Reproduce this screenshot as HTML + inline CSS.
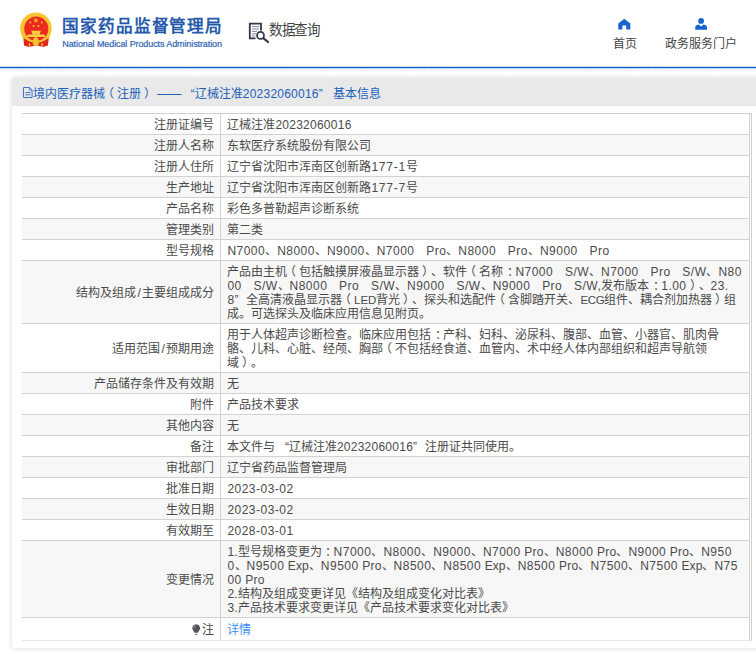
<!DOCTYPE html>
<html lang="zh-CN">
<head>
<meta charset="utf-8">
<title>国家药品监督管理局 数据查询</title>
<style>
*{box-sizing:border-box;margin:0;padding:0}
html,body{width:756px;height:654px;overflow:hidden;background:#fff}
body{text-spacing-trim:space-all;font-family:"Liberation Sans",sans-serif;font-size:12px;color:#444;position:relative}
.abs{position:absolute;white-space:nowrap}
#hdr{position:absolute;left:0;top:0;width:756px;height:66px;background:#fff}
#blueline{position:absolute;left:0;top:66px;width:756px;height:3px;background:linear-gradient(#c9dbf2 0,#c9dbf2 1px,#1163c3 1px,#1163c3 2px,#bcd3ef 2px,#bcd3ef 3px)}
#hatch{left:0;top:69px}
#title{left:62.4px;top:14.2px;font-size:16.6px;font-weight:bold;color:#2659ab;line-height:26px;letter-spacing:.85px}
#sub{left:62.3px;top:37.6px;font-size:9px;letter-spacing:-.1px;color:#2e62b3;line-height:12px;-webkit-text-stroke:.2px #2e62b3}
#q{left:269px;top:20.3px;font-size:13.5px;letter-spacing:-.3px;color:#444;line-height:22px;transform:scaleY(1.09);transform-origin:50% 50%}
.nav{font-size:12px;color:#444;line-height:14px}
#card{position:absolute;left:12px;top:78px;width:760px;height:570px;background:#fff;
 box-shadow:0 0 5px rgba(0,0,0,.16)}
#cardh{position:absolute;left:0;top:0;width:100%;height:28px;background:#e9e9e9;color:#2060b8;
 font-size:12px;line-height:32px;padding-left:21.3px;white-space:nowrap}
table{position:absolute;left:10px;top:35px;width:730px;padding-right:1px;border-collapse:separate;border-spacing:0;
 border-top:1px solid #cfcfcf;border-right:1px solid #cfcfcf;table-layout:fixed}
td{border-bottom:1px solid #d2d2d2;padding:4px 7px 2px 6.4px;line-height:14px;font-size:12px;
 vertical-align:middle;white-space:nowrap;overflow:hidden;color:#4a4a4a}
td.l{width:199px;text-align:right;padding-right:5.6px;border-right:1px solid #d2d2d2}
td:last-child{border-right:1px solid #d0d0d0}
tr.g td{background:#f7f7f7}
tr:last-child td{border-bottom:1px solid #e4e6f0;height:23px}
i{font-style:normal;letter-spacing:.48px;word-spacing:.1px;white-space:pre}
u{text-decoration:none;display:inline-block;width:11.5px;text-align:left}
s{text-decoration:none;display:inline-block;width:13.5px;text-align:right}
b{font-weight:normal;padding:0 1.6px}
i.w{letter-spacing:.75px}
i.z{letter-spacing:.1px}
i.d{letter-spacing:.25px}
i.p{letter-spacing:.22px}
em{font-style:normal;position:relative;left:-3px}
em.r{left:3px}
em.c{left:3.5px}
a{color:#3a8ef6;font-size:12px}
.bulb{vertical-align:-1px;margin-right:1.6px}
svg{position:absolute;overflow:visible}
td svg{position:static}
</style>
</head>
<body>
<div id="hdr">
<svg style="left:20px;top:12px" width="32" height="36" viewBox="20 12 32 36">
<circle cx="35.9" cy="28.3" r="15.8" fill="#f7c530"/>
<circle cx="36.3" cy="28.7" r="12.1" fill="#ee2a20"/>
<path d="M23.3 37.4 L24.1 45.6 L28.8 46.9 L36 45.3 L43.2 46.9 L47.9 45.6 L48.9 37.4 Q36 48 23.3 37.4 Z" fill="#e32519"/>
<path d="M24.2 37 Q36 46.6 48.4 37" fill="none" stroke="#f7c530" stroke-width="1.2"/>
<path d="M22.2 36 L24.4 38.6 M49.8 36 L47.9 38.6" stroke="#f7c530" stroke-width="1.6"/>
<path d="M31.3 30.8 H40.9 L40.1 33.1 H32.1 Z" fill="#f9cf36"/>
<rect x="32.3" y="33.1" width="7.6" height="1.6" fill="#fbdc62"/>
<path d="M27.6 34.6 H44.6 L45.1 37 H27 Z" fill="#f9d23a"/>
<circle cx="35.8" cy="39.7" r="2.5" fill="#f7c832"/>
<path d="M32.6 43 L35.8 42 L39 43 L38.2 44.9 L35.8 45.4 L33.4 44.9 Z" fill="#f7c832"/>
<path d="M28.6 43.2 L30.2 43.6 L30.1 46.6 L29 46.4 Z M41.4 43.6 L43 43.2 L42.6 46.4 L41.5 46.6 Z" fill="#f5d04a"/>
<polygon points="35.9,17.5 36.6,19.5 38.7,19.5 37,20.8 37.7,22.8 35.9,21.6 34.1,22.8 34.8,20.8 33.1,19.5 35.2,19.5" fill="#f7c530"/>
<circle cx="30.3" cy="22.6" r="1" fill="#f7c530"/><circle cx="41.8" cy="22.6" r="1" fill="#f7c530"/>
<circle cx="33.6" cy="26.1" r="1" fill="#f7c530"/><circle cx="38.5" cy="26.1" r="1" fill="#f7c530"/>
</svg>
<svg style="left:248px;top:22px" width="22" height="21" viewBox="248 22 22 21" fill="none" stroke="#34344a">
<path d="M261 30.5 V23.7 H249.8 V38.3 H255.5" stroke-width="1.8"/>
<path d="M252 26.6 H259 M252 29 H259 M252 31.4 H257 M252 33.8 H255.8 M252 36 H255.2" stroke-width="1" stroke="#85858f"/>
<circle cx="260.5" cy="35.4" r="3.5" stroke-width="1.7" fill="#fff"/>
<path d="M263.3 38.2 L268 42" stroke-width="2.2" stroke-linecap="round"/>
</svg>
<svg style="left:618px;top:18px" width="13" height="12" viewBox="618 18 13 12">
<path d="M624.3 18.8 L630.3 23.6 V29.4 H626.2 V25.6 H622.4 V29.4 H618.3 V23.6 Z" fill="#1763d0"/></svg>
<svg style="left:695px;top:17px" width="13" height="13" viewBox="695 17 13 13">
<circle cx="701.1" cy="20.9" r="2.9" fill="#1763d0"/>
<path d="M695.2 29.8 V27.6 Q695.2 25.2 698.6 24.6 L701.1 26.6 L703.6 24.6 Q707 25.2 707 27.6 V29.8 Z" fill="#1763d0"/></svg>
<div id="title" class="abs">国家药品监督管理局</div>
<div id="sub" class="abs">National Medical Products Administration</div>
<div id="q" class="abs">数据查询</div>
<div class="abs nav" style="left:612.5px;top:37px">首页</div>
<div class="abs nav" style="left:664.5px;top:37px">政务服务门户</div>
</div>
<div id="blueline"></div>
<svg id="hatch" width="756" height="3" viewBox="0 0 756 3"><path d="M0.4 2.3l1.8-1.8M3.47 2.3l1.8-1.8M6.54 2.3l1.8-1.8M9.61 2.3l1.8-1.8M12.68 2.3l1.8-1.8M15.75 2.3l1.8-1.8M18.82 2.3l1.8-1.8M21.89 2.3l1.8-1.8M24.96 2.3l1.8-1.8M28.03 2.3l1.8-1.8M31.1 2.3l1.8-1.8M34.17 2.3l1.8-1.8M37.24 2.3l1.8-1.8M40.31 2.3l1.8-1.8M43.38 2.3l1.8-1.8M46.45 2.3l1.8-1.8M49.52 2.3l1.8-1.8M52.59 2.3l1.8-1.8M55.66 2.3l1.8-1.8M58.73 2.3l1.8-1.8M61.8 2.3l1.8-1.8M64.87 2.3l1.8-1.8M67.94 2.3l1.8-1.8M71.01 2.3l1.8-1.8M74.08 2.3l1.8-1.8M77.15 2.3l1.8-1.8M80.22 2.3l1.8-1.8M83.29 2.3l1.8-1.8M86.36 2.3l1.8-1.8M89.43 2.3l1.8-1.8M92.5 2.3l1.8-1.8M95.57 2.3l1.8-1.8M98.64 2.3l1.8-1.8M101.71 2.3l1.8-1.8M104.78 2.3l1.8-1.8M107.85 2.3l1.8-1.8M110.92 2.3l1.8-1.8M113.99 2.3l1.8-1.8M117.06 2.3l1.8-1.8M120.13 2.3l1.8-1.8M123.2 2.3l1.8-1.8M126.27 2.3l1.8-1.8M129.34 2.3l1.8-1.8M132.41 2.3l1.8-1.8M135.48 2.3l1.8-1.8M138.55 2.3l1.8-1.8M141.62 2.3l1.8-1.8M144.69 2.3l1.8-1.8M147.76 2.3l1.8-1.8M150.83 2.3l1.8-1.8M153.9 2.3l1.8-1.8M156.97 2.3l1.8-1.8M160.04 2.3l1.8-1.8M163.11 2.3l1.8-1.8M166.18 2.3l1.8-1.8M169.25 2.3l1.8-1.8M172.32 2.3l1.8-1.8M175.39 2.3l1.8-1.8M178.46 2.3l1.8-1.8M181.53 2.3l1.8-1.8M184.6 2.3l1.8-1.8M187.67 2.3l1.8-1.8M190.74 2.3l1.8-1.8M193.81 2.3l1.8-1.8M196.88 2.3l1.8-1.8M199.95 2.3l1.8-1.8M203.02 2.3l1.8-1.8M206.09 2.3l1.8-1.8M209.16 2.3l1.8-1.8M212.23 2.3l1.8-1.8M215.3 2.3l1.8-1.8M218.37 2.3l1.8-1.8M221.44 2.3l1.8-1.8M224.51 2.3l1.8-1.8M227.58 2.3l1.8-1.8M230.65 2.3l1.8-1.8M233.72 2.3l1.8-1.8M236.79 2.3l1.8-1.8M239.86 2.3l1.8-1.8M242.93 2.3l1.8-1.8M246.0 2.3l1.8-1.8M249.07 2.3l1.8-1.8M252.14 2.3l1.8-1.8M255.21 2.3l1.8-1.8M258.28 2.3l1.8-1.8M261.35 2.3l1.8-1.8M264.42 2.3l1.8-1.8M267.49 2.3l1.8-1.8M270.56 2.3l1.8-1.8M273.63 2.3l1.8-1.8M276.7 2.3l1.8-1.8M279.77 2.3l1.8-1.8M282.84 2.3l1.8-1.8M285.91 2.3l1.8-1.8M288.98 2.3l1.8-1.8M292.05 2.3l1.8-1.8M295.12 2.3l1.8-1.8M298.19 2.3l1.8-1.8M301.26 2.3l1.8-1.8M304.33 2.3l1.8-1.8M307.4 2.3l1.8-1.8M310.47 2.3l1.8-1.8M313.54 2.3l1.8-1.8M316.61 2.3l1.8-1.8M319.68 2.3l1.8-1.8M322.75 2.3l1.8-1.8M325.82 2.3l1.8-1.8M328.89 2.3l1.8-1.8M331.96 2.3l1.8-1.8M335.03 2.3l1.8-1.8M338.1 2.3l1.8-1.8M341.17 2.3l1.8-1.8M344.24 2.3l1.8-1.8M347.31 2.3l1.8-1.8M350.38 2.3l1.8-1.8M353.45 2.3l1.8-1.8M356.52 2.3l1.8-1.8M359.59 2.3l1.8-1.8M362.66 2.3l1.8-1.8M365.73 2.3l1.8-1.8M368.8 2.3l1.8-1.8M371.87 2.3l1.8-1.8M374.94 2.3l1.8-1.8M378.01 2.3l1.8-1.8M381.08 2.3l1.8-1.8M384.15 2.3l1.8-1.8M387.22 2.3l1.8-1.8M390.29 2.3l1.8-1.8M393.36 2.3l1.8-1.8M396.43 2.3l1.8-1.8M399.5 2.3l1.8-1.8M402.57 2.3l1.8-1.8M405.64 2.3l1.8-1.8M408.71 2.3l1.8-1.8M411.78 2.3l1.8-1.8M414.85 2.3l1.8-1.8M417.92 2.3l1.8-1.8M420.99 2.3l1.8-1.8M424.06 2.3l1.8-1.8M427.13 2.3l1.8-1.8M430.2 2.3l1.8-1.8M433.27 2.3l1.8-1.8M436.34 2.3l1.8-1.8M439.41 2.3l1.8-1.8M442.48 2.3l1.8-1.8M445.55 2.3l1.8-1.8M448.62 2.3l1.8-1.8M451.69 2.3l1.8-1.8M454.76 2.3l1.8-1.8M457.83 2.3l1.8-1.8M460.9 2.3l1.8-1.8M463.97 2.3l1.8-1.8M467.04 2.3l1.8-1.8M470.11 2.3l1.8-1.8M473.18 2.3l1.8-1.8M476.25 2.3l1.8-1.8M479.32 2.3l1.8-1.8M482.39 2.3l1.8-1.8M485.46 2.3l1.8-1.8M488.53 2.3l1.8-1.8M491.6 2.3l1.8-1.8M494.67 2.3l1.8-1.8M497.74 2.3l1.8-1.8M500.81 2.3l1.8-1.8M503.88 2.3l1.8-1.8M506.95 2.3l1.8-1.8M510.02 2.3l1.8-1.8M513.09 2.3l1.8-1.8M516.16 2.3l1.8-1.8M519.23 2.3l1.8-1.8M522.3 2.3l1.8-1.8M525.37 2.3l1.8-1.8M528.44 2.3l1.8-1.8M531.51 2.3l1.8-1.8M534.58 2.3l1.8-1.8M537.65 2.3l1.8-1.8M540.72 2.3l1.8-1.8M543.79 2.3l1.8-1.8M546.86 2.3l1.8-1.8M549.93 2.3l1.8-1.8M553.0 2.3l1.8-1.8M556.07 2.3l1.8-1.8M559.14 2.3l1.8-1.8M562.21 2.3l1.8-1.8M565.28 2.3l1.8-1.8M568.35 2.3l1.8-1.8M571.42 2.3l1.8-1.8M574.49 2.3l1.8-1.8M577.56 2.3l1.8-1.8M580.63 2.3l1.8-1.8M583.7 2.3l1.8-1.8M586.77 2.3l1.8-1.8M589.84 2.3l1.8-1.8M592.91 2.3l1.8-1.8M595.98 2.3l1.8-1.8M599.05 2.3l1.8-1.8M602.12 2.3l1.8-1.8M605.19 2.3l1.8-1.8M608.26 2.3l1.8-1.8M611.33 2.3l1.8-1.8M614.4 2.3l1.8-1.8M617.47 2.3l1.8-1.8M620.54 2.3l1.8-1.8M623.61 2.3l1.8-1.8M626.68 2.3l1.8-1.8M629.75 2.3l1.8-1.8M632.82 2.3l1.8-1.8M635.89 2.3l1.8-1.8M638.96 2.3l1.8-1.8M642.03 2.3l1.8-1.8M645.1 2.3l1.8-1.8M648.17 2.3l1.8-1.8M651.24 2.3l1.8-1.8M654.31 2.3l1.8-1.8M657.38 2.3l1.8-1.8M660.45 2.3l1.8-1.8M663.52 2.3l1.8-1.8M666.59 2.3l1.8-1.8M669.66 2.3l1.8-1.8M672.73 2.3l1.8-1.8M675.8 2.3l1.8-1.8M678.87 2.3l1.8-1.8M681.94 2.3l1.8-1.8M685.01 2.3l1.8-1.8M688.08 2.3l1.8-1.8M691.15 2.3l1.8-1.8M694.22 2.3l1.8-1.8M697.29 2.3l1.8-1.8M700.36 2.3l1.8-1.8M703.43 2.3l1.8-1.8M706.5 2.3l1.8-1.8M709.57 2.3l1.8-1.8M712.64 2.3l1.8-1.8M715.71 2.3l1.8-1.8M718.78 2.3l1.8-1.8M721.85 2.3l1.8-1.8M724.92 2.3l1.8-1.8M727.99 2.3l1.8-1.8M731.06 2.3l1.8-1.8M734.13 2.3l1.8-1.8M737.2 2.3l1.8-1.8M740.27 2.3l1.8-1.8M743.34 2.3l1.8-1.8M746.41 2.3l1.8-1.8M749.48 2.3l1.8-1.8M752.55 2.3l1.8-1.8M755.62 2.3l1.8-1.8" stroke="#d4d4d4" stroke-width=".8" fill="none"/></svg>
<div id="card">
<div id="cardh"><svg style="left:10.8px;top:9.2px" width="10" height="11" viewBox="0 0 10 11" fill="none" stroke="#2c66c4" stroke-width=".9"><path d="M.5 .5 H6.6 L9.1 3 V10.5 H.5 Z"/><path d="M6.4 .8 V3.2 H8.8" stroke-width=".7"/><path d="M2.3 5.5 H7.5 M2.3 7.8 H7.5" stroke-width=".9"/></svg>境内医疗器械<em>（</em>注册<em class="r">）</em><span style="display:inline-block;width:4px"></span>——<s>“</s>辽械注准<i style="letter-spacing:.23px">20232060016</i><u style="width:14px">”</u>基本信息</div>
<table>
<tr><td class="l">注册证编号</td><td>辽械注准<i class="d">20232060016</i></td></tr>
<tr class="g"><td class="l">注册人名称</td><td>东软医疗系统股份有限公司</td></tr>
<tr><td class="l">注册人住所</td><td>辽宁省沈阳市浑南区创新路<i class="w">177-1</i>号</td></tr>
<tr class="g"><td class="l">生产地址</td><td>辽宁省沈阳市浑南区创新路<i class="w">177-7</i>号</td></tr>
<tr><td class="l">产品名称</td><td>彩色多普勒超声诊断系统</td></tr>
<tr class="g"><td class="l">管理类别</td><td>第二类</td></tr>
<tr><td class="l">型号规格</td><td><i>N7000</i>、<i>N8000</i>、<i>N9000</i>、<i>N7000   Pro</i>、<i>N8000   Pro</i>、<i>N9000   Pro</i></td></tr>
<tr class="g"><td class="l">结构及组成<b>/</b>主要组成成分</td><td>产品由主机<em>（</em>包括触摸屏液晶显示器<em class="r">）</em>、软件<em>（</em>名称<em class="c">：</em><i>N7000   S/W</i>、<i>N7000   Pro   S/W</i>、<i>N80</i><br><i>00   S/W</i>、<i>N8000   Pro   S/W</i>、<i>N9000   S/W</i>、<i>N9000   Pro   S/W,</i>发布版本<em class="c">：</em><i>1.00</i><em class="r">）</em>、<i>23.</i><br><i>8</i><u>”</u>全高清液晶显示器<em>（</em><i style="font-size:11.5px;letter-spacing:0">LED</i>背光<em class="r">）</em>、探头和选配件<em>（</em>含脚踏开关、<i style="font-size:11.5px;letter-spacing:-.35px">ECG</i>组件、耦合剂加热器<em class="r">）</em>组<br>成。可选探头及临床应用信息见附页。</td></tr>
<tr><td class="l">适用范围<b>/</b>预期用途</td><td>用于人体超声诊断检查。临床应用包括<em class="c">：</em>产科、妇科、泌尿科、腹部、血管、小器官、肌肉骨<br>骼、儿科、心脏、经颅、胸部<em>（</em>不包括经食道、血管内、术中经人体内部组织和超声导航领<br>域<em class="r">）</em>。</td></tr>
<tr class="g"><td class="l">产品储存条件及有效期</td><td>无</td></tr>
<tr><td class="l">附件</td><td>产品技术要求</td></tr>
<tr class="g"><td class="l">其他内容</td><td>无</td></tr>
<tr><td class="l">备注</td><td>本文件与<s>“</s>辽械注准<i class="d">20232060016</i><u>”</u>注册证共同使用。</td></tr>
<tr class="g"><td class="l">审批部门</td><td>辽宁省药品监督管理局</td></tr>
<tr><td class="l">批准日期</td><td><i>2023-03-02</i></td></tr>
<tr class="g"><td class="l">生效日期</td><td><i>2023-03-02</i></td></tr>
<tr><td class="l">有效期至</td><td><i>2028-03-01</i></td></tr>
<tr class="g"><td class="l">变更情况</td><td><i class="z">1.</i>型号规格变更为<em class="c">：</em><i>N7000</i>、<i>N8000</i>、<i>N9000</i>、<i>N7000</i><i class="p"> Pro</i>、<i>N8000</i><i class="p"> Pro</i>、<i>N9000</i><i class="p"> Pro</i>、<i>N950</i><br><i>0</i>、<i>N9500</i><i class="z"> Exp</i>、<i>N9500</i><i class="p"> Pro</i>、<i>N8500</i>、<i>N8500</i><i class="z"> Exp</i>、<i>N8500</i><i class="p"> Pro</i>、<i>N7500</i>、<i>N7500</i><i class="z"> Exp</i>、<i>N75</i><br><i>00</i><i class="p"> Pro</i><br><i class="z">2.</i>结构及组成变更详见《结构及组成变化对比表》<br><i class="z">3.</i>产品技术要求变更详见《产品技术要求变化对比表》</td></tr>
<tr><td class="l"><svg class="bulb" width="9" height="11" viewBox="0 0 9 11"><path d="M4.2 .2A4 4 0 0 1 6.6 7.4L5.9 8.7H2.5L1.8 7.4A4 4 0 0 1 4.2 .2Z" fill="#55555e"/><path d="M3 10.3H5.4" stroke="#55555e" stroke-width=".9"/><path d="M1.7 3.9A2.9 2.9 0 0 1 3.7 1.6" fill="none" stroke="#c9c9d2" stroke-width=".7"/></svg>注</td><td><a>详情</a></td></tr>
</table>
</div>
</body>
</html>
